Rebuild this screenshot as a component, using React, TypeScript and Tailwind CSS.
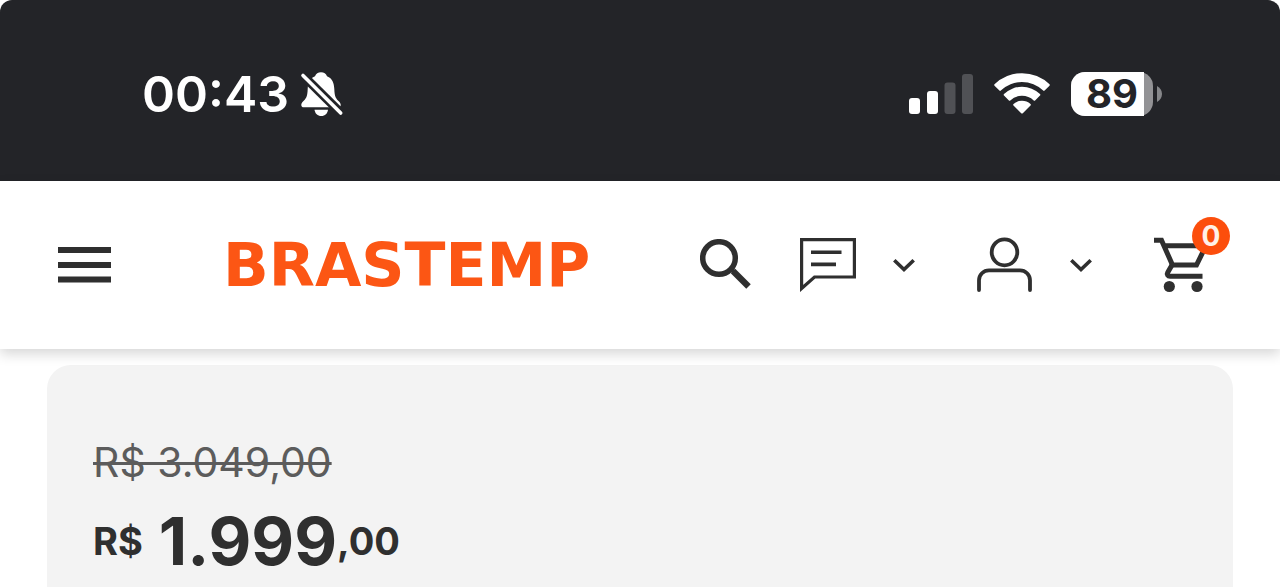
import type { ReactNode } from "react";

function SilentBell() {
  return (
    <svg width="44" height="46" viewBox="0 0 44 46" aria-hidden="true">
      <path
        d="M21 1.3c-3 0-5 1.6-6 4C9.500 7.500 8 12 7.700 18c-.3 8-1.700 9.500-4.700 12.500C1.500 32 1.300 33 1.300 34c0 1.500 1 2.300 2.500 2.300h34.400c1.500 0 2.500-.8 2.500-2.300 0-1-.3-2-1.700-3.500-3-3-4.400-4.500-4.700-12.500-.3-6-1.800-10.500-7.300-12.700-1-2.400-3-4-6-4Z"
        fill="#fff"
      />
      <path d="M14.500 38.700h13.500c-.5 3.800-3 6.300-6.700 6.300s-6.300-2.500-6.800-6.300Z" fill="#fff" />
      <path d="M1 2.500 43 44" stroke="#232428" strokeWidth="9" />
      <path d="M3 4.500 40.700 42" stroke="#fff" strokeWidth="3.600" strokeLinecap="round" />
    </svg>
  );
}

function Signal() {
  return (
    <svg width="64" height="40" viewBox="0 0 64 40" aria-hidden="true">
      <rect x="0" y="24" width="11" height="16" rx="3" fill="#fff" />
      <rect x="18" y="17" width="11" height="23" rx="3" fill="#fff" />
      <rect x="35.500" y="8.500" width="11" height="31.500" rx="3" fill="#505155" />
      <rect x="53" y="0" width="11" height="40" rx="3" fill="#505155" />
    </svg>
  );
}

function Wifi() {
  return (
    <svg width="56" height="42" viewBox="0 0 56 42" fill="#fff" aria-hidden="true">
      <path d="M.5 11.300a39.500 39.500 0 0 1 55 0c.4.400.4 1 0 1.400l-4.900 4.900c-.4.400-1 .4-1.400 0a30.500 30.500 0 0 0-42.400 0c-.4.400-1 .4-1.400 0L.5 12.700c-.4-.4-.4-1 0-1.400Z" />
      <path d="M10 21a26 26 0 0 1 36 0c.5.500.5 1 0 1.500l-4.900 4.900c-.4.400-1 .4-1.400 0a17.200 17.200 0 0 0-23.400 0c-.4.400-1 .4-1.400 0L10 22.500c-.5-.5-.5-1 0-1.500Z" />
      <path d="M19.500 31a13 13 0 0 1 17 0c.5.500.5 1 0 1.500l-7.700 7.700c-.5.500-1.100.5-1.600 0l-7.700-7.700c-.5-.5-.5-1 0-1.500Z" />
    </svg>
  );
}

function Battery({ level }: { level: number }) {
  return (
    <div className="flex items-center gap-1">
      <div className="relative flex h-11 w-[82px] items-center justify-center rounded-[14px] bg-[#929295]">
        <div className="absolute inset-y-0 left-0 rounded-l-[14px] bg-white" style={{ width: `${level}%` }} />
        <span className="relative text-[40px] leading-none font-bold text-[#232428]">{level}</span>
      </div>
      <svg width="5" height="16" viewBox="0 0 5 16" aria-hidden="true">
        <path d="M0 0c3 1.500 5 4.500 5 8s-2 6.500-5 8Z" fill="#86878a" />
      </svg>
    </div>
  );
}

function StatusBar() {
  return (
    <div className="flex h-[181px] items-center justify-between rounded-t-xl bg-[#232428] pt-1.5 pr-[118px] pl-[142px]">
      <div className="flex items-center gap-[11px] text-white">
        <span className="text-[50px] leading-none font-semibold">00:43</span>
        <SilentBell />
      </div>
      <div className="flex items-center gap-[21px]">
        <Signal />
        <Wifi />
        <Battery level={89} />
      </div>
    </div>
  );
}

function Chevron() {
  return (
    <svg width="24" height="14" viewBox="0 0 24 14" fill="none" aria-hidden="true">
      <path d="m2.300 2.200 9.700 9.300 9.700-9.300" stroke="currentColor" strokeWidth="3.600" />
    </svg>
  );
}

function IconButton({ label, children }: { label: string; children: ReactNode }) {
  return (
    <button type="button" aria-label={label} className="relative flex shrink-0 items-center gap-9">
      {children}
    </button>
  );
}

function Header() {
  return (
    <header className="relative flex h-[168px] items-center bg-white pr-[74px] pl-[58px] text-[#2f2f2f] shadow-[0_5px_12px_rgba(0,0,0,0.16)]">
      <IconButton label="Menu">
        <svg width="53" height="36" viewBox="0 0 53 36" fill="currentColor" aria-hidden="true">
          <path d="M0 0h53v6H0zM0 15h53v6H0zM0 29.500h53v6H0z" />
        </svg>
      </IconButton>
      <a
        href="#"
        className="ml-28 font-['DejaVu_Sans',sans-serif] text-[60px] leading-none font-bold text-[#fc5614]"
      >
        BRASTEMP
      </a>
      <nav className="ml-auto flex items-center gap-[61px]">
        <div className="flex items-center gap-12">
          <IconButton label="Buscar">
            <svg width="52" height="52" viewBox="0 0 52 52" fill="none" stroke="currentColor" aria-hidden="true">
              <circle cx="19" cy="19" r="16.300" strokeWidth="5.500" />
              <path d="m31 30 3 3" strokeWidth="4" />
              <path d="m33 32 15.500 15.500" strokeWidth="6.300" />
            </svg>
          </IconButton>
          <IconButton label="Atendimento">
            <svg width="56" height="54" viewBox="0 0 56 54" fill="none" stroke="currentColor" aria-hidden="true">
              <path d="M1.600 1.600h52.800V39H14.500L1.600 50.500Z" strokeWidth="3.200" />
              <path d="M11 14.300h30.500M11 26.400h25" strokeWidth="3.600" />
            </svg>
            <Chevron />
          </IconButton>
        </div>
        <IconButton label="Minha conta">
          <svg
            width="56"
            height="56"
            viewBox="0 0 56 56"
            fill="none"
            stroke="currentColor"
            strokeWidth="3.800"
            strokeLinecap="round"
            aria-hidden="true"
          >
            <ellipse cx="27.500" cy="15.300" rx="12.800" ry="13" />
            <path d="M2 53V43.300a10 10 0 0 1 10-10h31a10 10 0 0 1 10 10V53" />
          </svg>
          <Chevron />
        </IconButton>
        <IconButton label="Carrinho">
          <svg width="52" height="56" viewBox="0 0 52 56" fill="none" stroke="currentColor" aria-hidden="true">
            <path d="M0 3.300h7.500L18.500 28h24L52 8.700H10" strokeWidth="5" />
            <path d="m18 28-4.300 7.500c-1.200 2 .2 3.700 2.300 3.700h32.500" strokeWidth="5" />
            <circle cx="15.300" cy="49.500" r="5.600" fill="currentColor" stroke="none" />
            <circle cx="43" cy="49.500" r="5.600" fill="currentColor" stroke="none" />
          </svg>
          <span className="absolute -top-5 -right-6 flex size-[38px] items-center justify-center rounded-full bg-[#fc4e0c] text-[28px] leading-none font-bold text-[#fff1e8]">
            0
          </span>
        </IconButton>
      </nav>
    </header>
  );
}

function PriceCard() {
  return (
    <section className="mx-[47px] mt-4 flex-1 rounded-t-3xl bg-[#f3f3f3] px-[46px] pt-[69px]">
      <p className="text-[41px] leading-[56px] text-[#5c5c5c]">
        <s className="decoration-[3px]">R$ 3.049,00</s>
      </p>
      <p className="mt-4 flex items-center text-[38px] leading-[70px] font-bold text-[#2f2f2f]">
        <span className="mr-4">R$</span>
        <span className="text-[66px]">1.999</span>
        <span>,00</span>
      </p>
    </section>
  );
}

export default function App() {
  return (
    <div className="flex min-h-screen flex-col bg-white font-['Inter',sans-serif]">
      <StatusBar />
      <Header />
      <PriceCard />
    </div>
  );
}
